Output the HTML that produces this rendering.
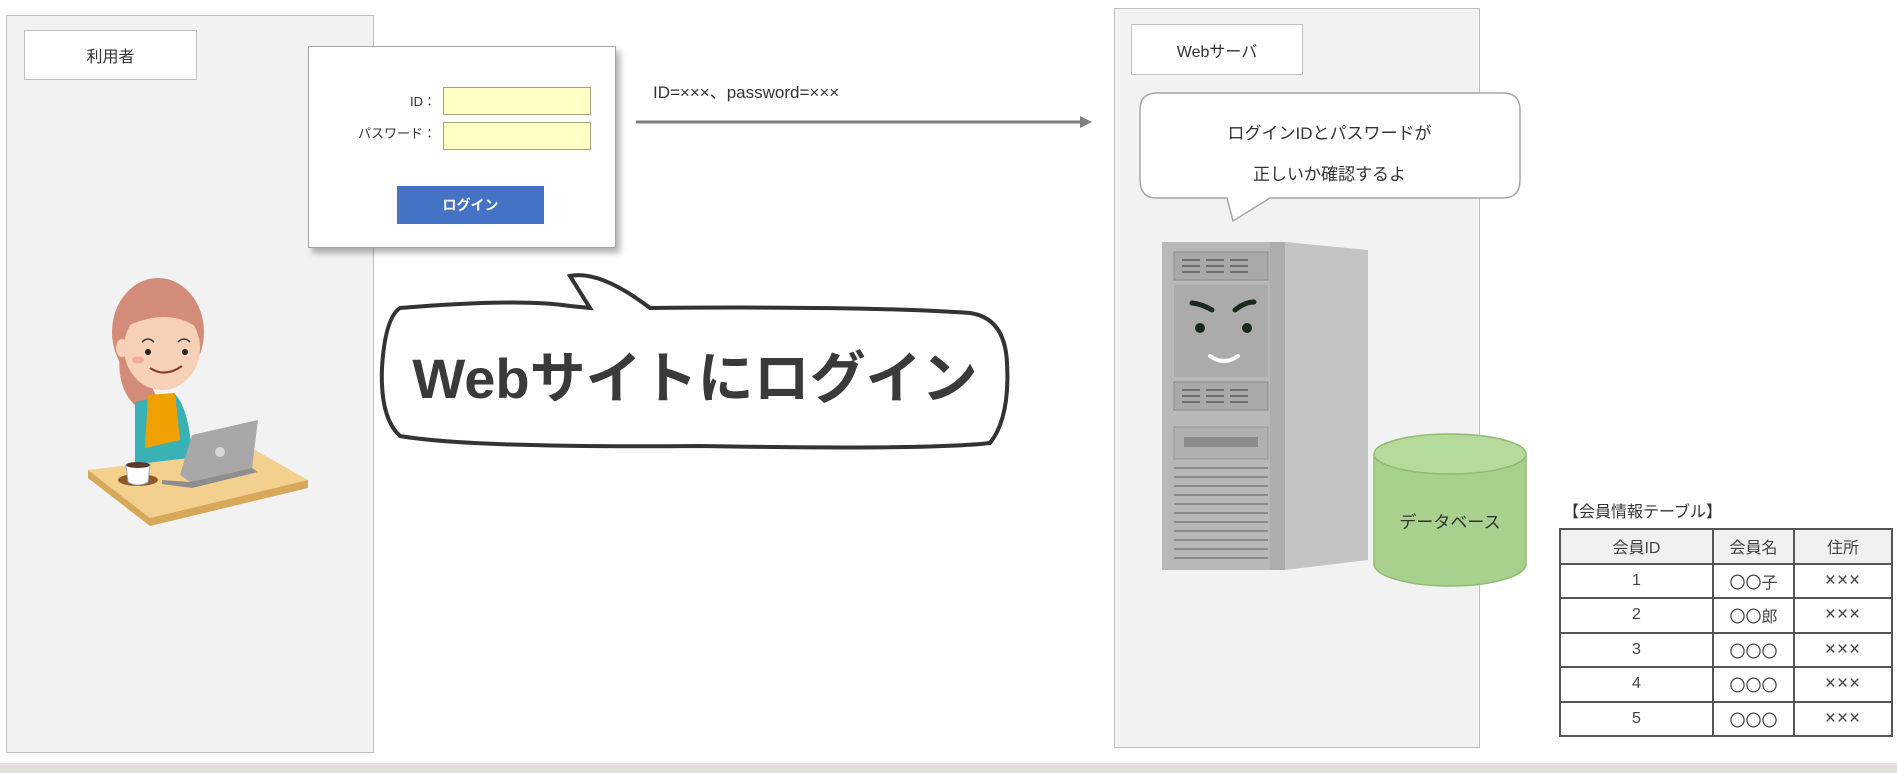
<!DOCTYPE html>
<html><head><meta charset="utf-8"><style>
*{margin:0;padding:0;box-sizing:border-box}
body{width:1897px;height:773px;background:#fff;position:relative;overflow:hidden;font-family:"Liberation Sans","Noto Sans CJK JP",sans-serif;color:#333}
.a{position:absolute}
.panel{background:#f2f2f2;border:1.5px solid #bfbfbf}
.lbl{background:#fff;border:1.5px solid #bfbfbf;display:flex;align-items:center;justify-content:center;font-size:16px;color:#333}
table{border-collapse:collapse}
td{border:2px solid #555;text-align:center;font-size:16px;height:34.5px;color:#444}
.x{font-size:19px;letter-spacing:1px}
</style></head><body>
<div class="a panel" style="left:6px;top:15px;width:368px;height:738px"></div>
<div class="a lbl" style="left:24px;top:30px;width:173px;height:50px">利用者</div>

<!-- woman -->
<svg class="a" style="left:80px;top:270px" width="240" height="270" viewBox="0 0 240 270">
<path d="M45 60 C35 90 38 120 55 135 L78 130 Z" fill="#d38b7a"/>
<ellipse cx="78" cy="62" rx="46" ry="54" fill="#d38b7a"/>
<ellipse cx="82" cy="78" rx="38" ry="42" fill="#f7d0b8"/>
<path d="M40 60 C50 20 110 18 122 62 C105 45 75 40 40 60Z" fill="#d38b7a"/>
<ellipse cx="42" cy="78" rx="6" ry="9" fill="#f7d0b8"/>
<circle cx="68" cy="82" r="3" fill="#222"/><circle cx="105" cy="82" r="3" fill="#222"/>
<path d="M62 72 Q68 66 74 72 M98 72 Q104 66 110 72" stroke="#333" stroke-width="1.5" fill="none"/>
<path d="M70 98 Q85 108 102 96" stroke="#8a3b2a" stroke-width="2" fill="none"/>
<ellipse cx="58" cy="90" rx="6" ry="3.5" fill="#f2a9a0"/>
<path d="M55 132 L95 124 Q110 140 112 190 L55 195 Z" fill="#39b1b5"/>
<path d="M68 125 L95 123 L100 170 L65 178 Z" fill="#f0a000"/>
<path d="M8 200 L175 180 L228 210 L70 248 Z" fill="#f4d08e"/>
<path d="M8 200 L70 248 L228 210 L228 218 L70 256 L8 208 Z" fill="#d7a85a"/>
<path d="M100 205 L112 165 L178 150 L172 198 L110 212 Z" fill="#a8a8a8"/>
<path d="M82 210 L110 212 L172 198 L178 202 L112 218 L82 214Z" fill="#8e8e8e"/>
<circle cx="140" cy="182" r="5" fill="#d8d8d8"/>
<ellipse cx="58" cy="210" rx="20" ry="6" fill="#8b5a2b"/>
<path d="M46 195 L70 195 L68 212 Q58 218 48 212 Z" fill="#fff" stroke="#9ab" stroke-width="1"/>
<ellipse cx="58" cy="195" rx="12" ry="3" fill="#5a3a2a"/>
</svg>

<!-- login -->
<div class="a" style="left:308px;top:46px;width:308px;height:202px;background:#fff;border:1.5px solid #a6a6a6;box-shadow:4px 5px 6px rgba(0,0,0,.3)"></div>
<div class="a" style="left:380px;top:91px;width:56px;text-align:right;font-size:13px">ID：</div>
<div class="a" style="left:330px;top:123px;width:106px;text-align:right;font-size:13px">パスワード：</div>
<div class="a" style="left:443px;top:87px;width:148px;height:28px;background:#ffffc6;border:1.5px solid #a5a574"></div>
<div class="a" style="left:443px;top:122px;width:148px;height:28px;background:#ffffc6;border:1.5px solid #a5a574"></div>
<div class="a" style="left:397px;top:186px;width:147px;height:38px;background:#4472c4;color:#fff;font-size:14px;font-weight:bold;display:flex;align-items:center;justify-content:center">ログイン</div>

<div class="a" style="left:653px;top:78px;font-size:17px;color:#333;font-family:'Liberation Sans',sans-serif">ID=×××、password=×××</div>
<svg class="a" style="left:630px;top:112px" width="470" height="20"><line x1="6" y1="10" x2="452" y2="10" stroke="#7f7f7f" stroke-width="3"/><path d="M450 4 L462 10 L450 16Z" fill="#7f7f7f"/></svg>

<!-- big bubble -->
<svg class="a" style="left:370px;top:268px" width="650" height="190">
<path d="M30 40 Q150 30 200 38 L220 40 L200 8 Q230 2 280 40 Q500 38 600 45 Q635 50 637 95 Q640 150 620 175 Q560 182 330 178 Q100 180 30 168 Q10 150 12 100 Q15 50 30 40Z" fill="#fff" stroke="#333" stroke-width="4"/>
<text x="325" y="130" text-anchor="middle" font-size="56" font-weight="bold" fill="#3a3a3a" font-family="Liberation Sans, Noto Sans CJK JP, sans-serif">Webサイトにログイン</text>
</svg>

<!-- server panel -->
<div class="a panel" style="left:1114px;top:8px;width:366px;height:740px"></div>
<div class="a lbl" style="left:1131px;top:24px;width:172px;height:51px">Webサーバ</div>
<svg class="a" style="left:1135px;top:90px" width="390" height="135">
<path d="M22 3 H368 Q385 3 385 20 V90 Q385 108 368 108 H135 L98 131 L92 108 H22 Q5 108 5 90 V20 Q5 3 22 3Z" fill="#fff" stroke="#a6a6a6" stroke-width="1.5"/>
</svg>
<div class="a" style="left:1139px;top:113px;width:381px;text-align:center;font-size:17px;line-height:41px;color:#333">ログインIDとパスワードが<br>正しいか確認するよ</div>

<svg class="a" style="left:1150px;top:230px" width="240" height="350">
<path d="M135 12 L218 20 L218 330 L135 340Z" fill="#c4c4c4"/>
<rect x="12" y="12" width="123" height="328" fill="#b8b8b8"/>
<rect x="120" y="12" width="15" height="328" fill="#adadad"/>
<rect x="24" y="22" width="94" height="28" fill="#a9a9a9" stroke="#8a8a8a"/>
<rect x="24" y="152" width="94" height="28" fill="#a9a9a9" stroke="#8a8a8a"/>
<g stroke="#6e6e6e" stroke-width="2"><path d="M32 30h18M32 36h18M32 42h18M56 30h18M56 36h18M56 42h18M80 30h18M80 36h18M80 42h18"/><path d="M32 160h18M32 166h18M32 172h18M56 160h18M56 166h18M56 172h18M80 160h18M80 166h18M80 172h18"/></g>
<rect x="24" y="55" width="94" height="92" fill="#ababab"/>
<path d="M42 73 Q52 74 62 80" stroke="#1a2a1a" stroke-width="5" fill="none" stroke-linecap="round"/>
<path d="M85 80 Q95 72 104 72" stroke="#1a2a1a" stroke-width="5" fill="none" stroke-linecap="round"/>
<circle cx="50" cy="98" r="5" fill="#1a2a1a"/><circle cx="97" cy="98" r="5" fill="#1a2a1a"/>
<path d="M60 126 Q74 136 88 126" stroke="#fff" stroke-width="4" fill="none" stroke-linecap="round"/>
<rect x="24" y="197" width="94" height="32" fill="#b0b0b0" stroke="#999"/>
<rect x="34" y="207" width="74" height="10" fill="#8c8c8c"/>
<g stroke="#8a8a8a" stroke-width="2"><path d="M24 238h94M24 247h94M24 256h94M24 265h94M24 274h94M24 283h94M24 292h94M24 301h94M24 310h94M24 319h94M24 328h94"/></g>
</svg>

<svg class="a" style="left:1370px;top:432px" width="160" height="160">
<path d="M4 22 V132 A76 22 0 0 0 156 132 V22" fill="#a9d18e" stroke="#8fbc72" stroke-width="1.5"/>
<ellipse cx="80" cy="22" rx="76" ry="20" fill="#b5da9c" stroke="#8fbc72" stroke-width="1.5"/>
<text x="80" y="96" text-anchor="middle" font-size="17" fill="#333" font-family="Liberation Sans, Noto Sans CJK JP, sans-serif">データベース</text>
</svg>

<div class="a" style="left:1563px;top:498px;font-size:16px;color:#333">【会員情報テーブル】</div>
<table class="a" style="left:1559px;top:528px;width:334px">
<tr style="background:#f0f0f0"><td style="width:153px">会員ID</td><td style="width:81px">会員名</td><td>住所</td></tr>
<tr><td>1</td><td>〇〇子</td><td class="x">×××</td></tr>
<tr><td>2</td><td>〇〇郎</td><td class="x">×××</td></tr>
<tr><td>3</td><td>〇〇〇</td><td class="x">×××</td></tr>
<tr><td>4</td><td>〇〇〇</td><td class="x">×××</td></tr>
<tr><td>5</td><td>〇〇〇</td><td class="x">×××</td></tr>
</table>

<div class="a" style="left:0;top:763px;width:1897px;height:10px;background:#e3e0dc"></div>
</body></html>
